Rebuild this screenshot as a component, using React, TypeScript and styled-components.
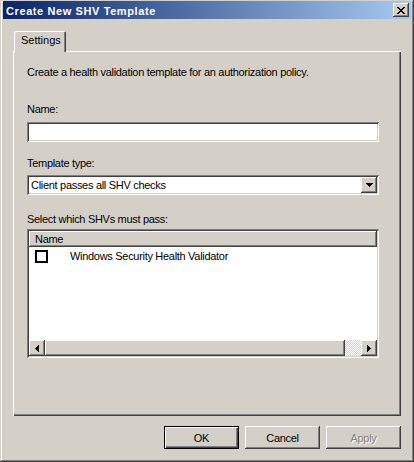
import styled, { createGlobalStyle, css } from "styled-components";

const GlobalStyle = createGlobalStyle`
  * {
    box-sizing: border-box;
  }
  html, body {
    margin: 0;
    padding: 0;
    background: #d4d0c8;
  }
  body {
    font-family: "Liberation Sans", Arial, sans-serif;
    font-size: 11px;
    letter-spacing: -0.3px;
    color: #000;
  }
`;

const raised = css`
  box-shadow: inset -1px -1px #404040, inset 1px 1px #fff, inset -2px -2px #808080,
    inset 2px 2px #d4d0c8;
`;

const sunken = css`
  box-shadow: inset 1px 1px #808080, inset -1px -1px #fff, inset 2px 2px #404040,
    inset -2px -2px #d4d0c8;
`;

const Window = styled.div`
  width: 414px;
  height: 462px;
  padding: 1px 3px 3px;
  display: flex;
  flex-direction: column;
  background: #d4d0c8;
  box-shadow: inset -1px -1px #404040, inset 1px 1px #d4d0c8, inset -2px -2px #808080,
    inset 2px 2px #fff;
`;

const TitleBar = styled.div`
  height: 19px;
  display: flex;
  align-items: center;
  justify-content: space-between;
  padding: 0 2px 0 3px;
  background: linear-gradient(to right, #0a246a, #a6caf0);
`;

const Title = styled.span`
  padding-top: 2px;
  color: #fff;
  font-weight: bold;
  font-size: 11px;
  letter-spacing: 0.6px;
`;

const CloseButton = styled.button`
  width: 16px;
  height: 14px;
  padding: 0;
  border: none;
  display: flex;
  align-items: center;
  justify-content: center;
  background: #d4d0c8;
  ${raised}
`;

const Body = styled.div`
  flex: 1;
  display: flex;
  flex-direction: column;
  padding: 12px 10px 10px;
`;

const TabStrip = styled.div`
  display: flex;
  height: 20px;
  padding-left: 1px;
`;

const Tab = styled.div`
  position: relative;
  z-index: 1;
  width: 52px;
  height: 21px;
  padding: 3px 0 0 7px;
  background: #d4d0c8;
  border-radius: 2px 2px 0 0;
  letter-spacing: 0;
  box-shadow: inset 1px 1px #fff, inset -1px 0 #404040, inset -2px 0 #808080;
`;

const Panel = styled.div`
  height: 365px;
  display: flex;
  flex-direction: column;
  padding: 15px 22px 0 14px;
  box-shadow: inset 1px 1px #fff, inset -1px -1px #404040, inset -2px -2px #808080;
`;

const Text = styled.div<{ $space?: number }>`
  line-height: 13px;
  margin-top: ${(p) => p.$space ?? 0}px;
  white-space: nowrap;
`;

const TextField = styled.div<{ $space: number }>`
  height: 20px;
  margin-top: ${(p) => p.$space}px;
  background: #fff;
  ${sunken}
`;

const Select = styled.div<{ $space: number }>`
  height: 20px;
  margin-top: ${(p) => p.$space}px;
  padding: 2px;
  display: flex;
  align-items: center;
  background: #fff;
  ${sunken}
`;

const SelectValue = styled.span`
  flex: 1;
  padding-left: 2px;
`;

const DropButton = styled.div`
  width: 16px;
  height: 16px;
  display: flex;
  align-items: center;
  justify-content: center;
  background: #d4d0c8;
  ${raised}
`;

const ListBox = styled.div<{ $space: number }>`
  height: 129px;
  margin-top: ${(p) => p.$space}px;
  padding: 2px;
  display: flex;
  flex-direction: column;
  background: #fff;
  ${sunken}
`;

const ListHeader = styled.div`
  height: 16px;
  line-height: 16px;
  padding-left: 6px;
  background: #d4d0c8;
  box-shadow: inset -1px -1px #404040, inset 1px 1px #fff, inset -2px -2px #808080;
`;

const ListRows = styled.div`
  flex: 1;
`;

const ListRow = styled.div`
  height: 16px;
  margin-top: 1px;
  display: flex;
  align-items: center;
  padding-left: 6px;
  gap: 22px;
`;

const CheckBox = styled.span`
  width: 13px;
  height: 13px;
  border: 2px solid #000;
  background: #fff;
`;

const ScrollBar = styled.div`
  height: 16px;
  display: flex;
`;

const ScrollButton = styled.div`
  width: 16px;
  height: 16px;
  display: flex;
  align-items: center;
  justify-content: center;
  background: #d4d0c8;
  ${raised}
`;

const Thumb = styled.div<{ $width: number }>`
  width: ${(p) => p.$width}px;
  height: 16px;
  background: #d4d0c8;
  ${raised}
`;

const Track = styled.div`
  flex: 1;
  background-color: #d4d0c8;
  background-image: conic-gradient(#fff 25%, #d4d0c8 0 50%, #fff 0 75%, #d4d0c8 0);
  background-size: 2px 2px;
`;

const ButtonRow = styled.div`
  display: flex;
  justify-content: flex-end;
  gap: 6px;
  margin-top: 10px;
`;

const DialogButton = styled.button<{ $default?: boolean }>`
  width: 75px;
  height: 23px;
  padding: 0;
  border: none;
  font-family: inherit;
  font-size: 11px;
  letter-spacing: inherit;
  color: #000;
  background: #d4d0c8;
  ${(p) =>
    p.$default
      ? css`
          box-shadow: inset 1px 1px #000, inset -1px -1px #000, inset 2px 2px #fff,
            inset -2px -2px #404040, inset -3px -3px #808080;
        `
      : raised}
  &:disabled {
    color: #808080;
    text-shadow: 1px 1px #fff;
  }
`;

type Dir = "left" | "right" | "down";

function Arrow({ dir }: { dir: Dir }) {
  const steps = [1, 3, 5, 7];
  if (dir === "down") {
    return (
      <svg width="7" height="4" shapeRendering="crispEdges">
        {steps.map((w, i) => (
          <rect key={i} x={(7 - w) / 2} y={3 - i} width={w} height={1} fill="#000" />
        ))}
      </svg>
    );
  }
  return (
    <svg width="4" height="7" shapeRendering="crispEdges">
      {steps.map((h, i) => (
        <rect
          key={i}
          x={dir === "left" ? i : 3 - i}
          y={(7 - h) / 2}
          width={1}
          height={h}
          fill="#000"
        />
      ))}
    </svg>
  );
}

const closeGlyph = ["##....##", ".##..##.", "..####..", "...##...", "..####..", ".##..##.", "##....##"];

function CloseIcon() {
  return (
    <svg width="8" height="7" shapeRendering="crispEdges">
      {closeGlyph.flatMap((row, y) =>
        row
          .split("")
          .map((c, x) => (c === "#" ? <rect key={`${x}-${y}`} x={x} y={y} width={1} height={1} fill="#000" /> : null))
      )}
    </svg>
  );
}

export default function App() {
  return (
    <>
      <GlobalStyle />
      <Window>
        <TitleBar>
          <Title>Create New SHV Template</Title>
          <CloseButton aria-label="Close">
            <CloseIcon />
          </CloseButton>
        </TitleBar>
        <Body>
          <TabStrip>
            <Tab>Settings</Tab>
          </TabStrip>
          <Panel>
            <Text>Create a health validation template for an authorization policy.</Text>
            <Text $space={24}>Name:</Text>
            <TextField $space={6} />
            <Text $space={15}>Template type:</Text>
            <Select $space={5}>
              <SelectValue>Client passes all SHV checks</SelectValue>
              <DropButton>
                <Arrow dir="down" />
              </DropButton>
            </Select>
            <Text $space={18}>Select which SHVs must pass:</Text>
            <ListBox $space={3}>
              <ListHeader>Name</ListHeader>
              <ListRows>
                <ListRow>
                  <CheckBox />
                  <span>Windows Security Health Validator</span>
                </ListRow>
              </ListRows>
              <ScrollBar>
                <ScrollButton>
                  <Arrow dir="left" />
                </ScrollButton>
                <Thumb $width={300} />
                <Track />
                <ScrollButton>
                  <Arrow dir="right" />
                </ScrollButton>
              </ScrollBar>
            </ListBox>
          </Panel>
          <ButtonRow>
            <DialogButton $default>OK</DialogButton>
            <DialogButton>Cancel</DialogButton>
            <DialogButton disabled>Apply</DialogButton>
          </ButtonRow>
        </Body>
      </Window>
    </>
  );
}
